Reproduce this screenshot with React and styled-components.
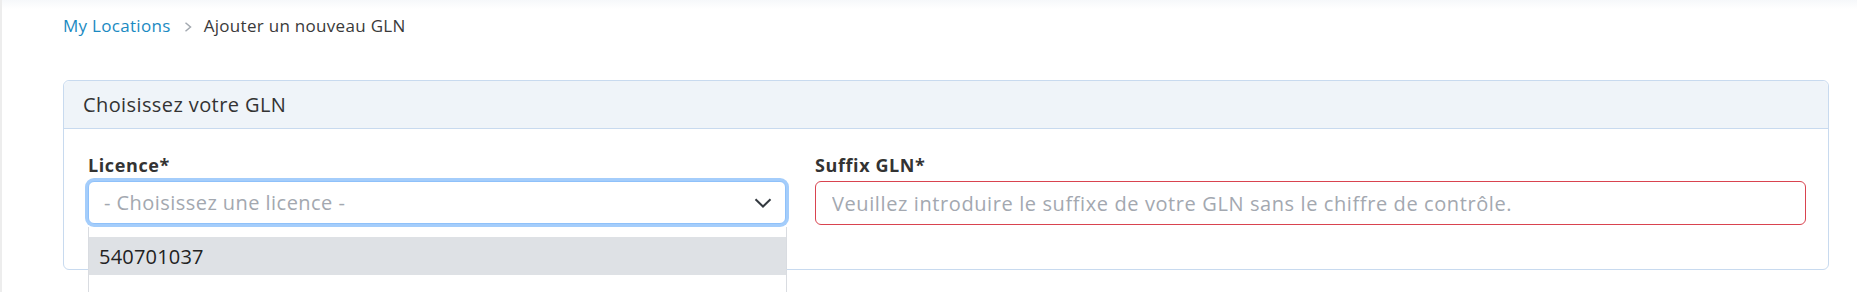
import React from "react";
import styled, { createGlobalStyle } from "styled-components";

const GlobalStyle = createGlobalStyle`
  html, body {
    margin: 0;
    padding: 0;
    background: #fff;
    font-family: "Open Sans", "Liberation Sans", sans-serif;
    color: #333;
  }
`;

const licences = ["540701037"];

export default function App() {
  return (
    <>
      <GlobalStyle />
      <Page>
        <Breadcrumb>
          <CrumbLink href="#">My Locations</CrumbLink>
          <CrumbSeparator viewBox="0 0 10 10">
            <path d="M2.5 0.8 L7.5 5 L2.5 9.2" />
          </CrumbSeparator>
          <CrumbCurrent>Ajouter un nouveau GLN</CrumbCurrent>
        </Breadcrumb>

        <Card>
          <CardHeader>Choisissez votre GLN</CardHeader>
          <CardBody>
            <FormGroup>
              <Label>Licence*</Label>
              <SelectWrap>
                <SelectBox $focused>
                  <Placeholder>- Choisissez une licence -</Placeholder>
                  <Caret viewBox="0 0 18 10">
                    <path d="M1.5 1.2 L9 8.5 L16.5 1.2" />
                  </Caret>
                </SelectBox>
                <OptionList>
                  {licences.map((l, i) => (
                    <Option key={l} $active={i === 0}>{l}</Option>
                  ))}
                </OptionList>
              </SelectWrap>
            </FormGroup>
            <FormGroup>
              <Label>Suffix GLN*</Label>
              <TextInput
                $invalid
                placeholder="Veuillez introduire le suffixe de votre GLN sans le chiffre de contrôle."
              />
            </FormGroup>
          </CardBody>
        </Card>
      </Page>
    </>
  );
}

const Page = styled.div`
  height: 292px;
  box-sizing: border-box;
  padding: 14px 28px 0 63px;
  border-left: 2px solid #ededed;
  background: linear-gradient(#f6f8fa 0px, #ffffff 9px);
  overflow: hidden;
`;

const Breadcrumb = styled.nav`
  display: flex;
  align-items: center;
  height: 22px;
  font-size: 17px;
  letter-spacing: 0.3px;
  margin-left: -2px;
`;

const CrumbLink = styled.a`
  color: #1a8ac2;
  text-decoration: none;
`;

const CrumbSeparator = styled.svg`
  width: 10px;
  height: 10px;
  margin: 3px 11px 0 12px;
  fill: none;
  stroke: #a3a9b0;
  stroke-width: 1.5;
`;

const CrumbCurrent = styled.span`
  color: #3a3a3a;
`;

const Card = styled.section`
  margin-top: 44px;
  margin-left: -2px;
  border: 1px solid #c8daef;
  border-radius: 6px;
  background: #fff;
`;

const CardHeader = styled.div`
  height: 47px;
  display: flex;
  align-items: center;
  padding: 0 19px;
  background: #eff4f9;
  border-bottom: 1px solid #c8daef;
  border-radius: 6px 6px 0 0;
  font-size: 20px;
  letter-spacing: 0.4px;
  color: #333;
`;

const CardBody = styled.div`
  display: grid;
  grid-template-columns: 698px 1fr;
  column-gap: 29px;
  padding: 25px 22px 44px 24px;
`;

const FormGroup = styled.div`
  display: flex;
  flex-direction: column;
`;

const Label = styled.label`
  font-size: 18px;
  font-weight: 700;
  letter-spacing: 0.6px;
  color: #333;
  line-height: 22px;
  margin-bottom: 5px;
`;

const SelectWrap = styled.div`
  position: relative;
`;

const SelectBox = styled.div`
  height: 43px;
  box-sizing: border-box;
  display: flex;
  align-items: center;
  justify-content: space-between;
  padding: 0 13px 0 15px;
  border: 1px solid ${(p) => (p.$focused ? "#8fc1fa" : "#ced4da")};
  border-radius: 6px;
  box-shadow: ${(p) => (p.$focused ? "0 0 0 3px #a4cdfb" : "none")};
  background: #fff;
`;

const Placeholder = styled.span`
  font-size: 20px;
  letter-spacing: 0.45px;
  color: #a3a8b0;
`;

const Caret = styled.svg`
  width: 18px;
  height: 10px;
  fill: none;
  stroke: #343a40;
  stroke-width: 2;
`;

const OptionList = styled.ul`
  position: absolute;
  top: 46px;
  left: 0;
  right: -1px;
  height: 80px;
  margin: 0;
  padding: 10px 0 0;
  list-style: none;
  background: #fff;
  border-left: 1px solid #d9dce1;
  border-right: 1px solid #d9dce1;
  z-index: 2;
`;

const Option = styled.li`
  height: 38px;
  display: flex;
  align-items: center;
  padding: 0 10px;
  font-size: 20px;
  letter-spacing: 0.2px;
  color: #222;
  background: ${(p) => (p.$active ? "#dee1e5" : "#fff")};
`;

const TextInput = styled.input`
  height: 44px;
  box-sizing: border-box;
  padding: 0 16px;
  border: 1px solid ${(p) => (p.$invalid ? "#d9434f" : "#ced4da")};
  border-radius: 6px;
  font-family: inherit;
  font-size: 20px;
  letter-spacing: 0.6px;
  color: #333;
  outline: none;

  &::placeholder {
    color: #a3a8b0;
  }
`;
